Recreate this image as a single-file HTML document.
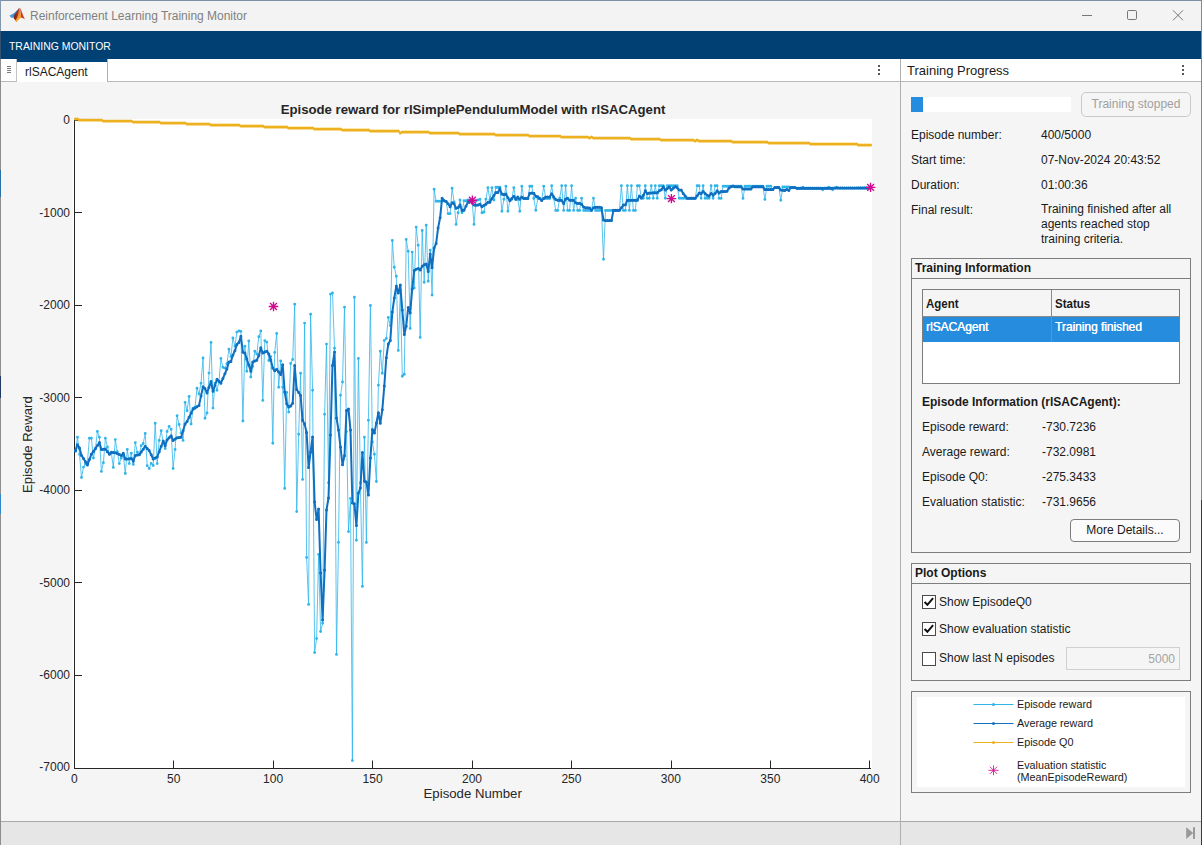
<!DOCTYPE html>
<html lang="en"><head><meta charset="utf-8"><title>Reinforcement Learning Training Monitor</title>
<style>
*{box-sizing:border-box;margin:0;padding:0}
html,body{width:1202px;height:845px;overflow:hidden;background:#f5f5f5}
body{font-family:"Liberation Sans",sans-serif;font-size:12px;color:#1a1a1a;position:relative}
.abs{position:absolute}
.t{position:absolute;white-space:nowrap;line-height:14px;height:14px}
#titlebar{left:0;top:0;width:1202px;height:31px;background:#f3f3f3}
#ribbon{left:1px;top:31px;width:1200px;height:28px;background:#004073}
#tabrow{left:1px;top:59px;width:1200px;height:23px;background:#fff;border-bottom:1px solid #b9b9b9}
#status{left:1px;top:821px;width:1200px;height:24px;background:#e6e6e6;border-top:1px solid #a9a9a9}
.panel{position:absolute;border:1px solid #7d7d7d;background:#f5f5f5}
.phead{position:absolute;left:0;top:0;right:0;height:20px;border-bottom:1px solid #7d7d7d}
.b{font-weight:bold}
</style></head>
<body>
<div id="titlebar" class="abs"></div>
<svg class="abs" style="left:8px;top:7px" width="18" height="16" viewBox="0 0 18 16">
<defs>
<linearGradient id="lgb" x1="0" y1="0" x2="1" y2="0"><stop offset="0" stop-color="#55a8e6"/><stop offset="0.6" stop-color="#2f86cf"/><stop offset="1" stop-color="#1c4f94"/></linearGradient>
<linearGradient id="lgo" x1="0" y1="0" x2="0" y2="1"><stop offset="0" stop-color="#e9862a"/><stop offset="0.6" stop-color="#f0952f"/><stop offset="1" stop-color="#f8b82e"/></linearGradient>
<linearGradient id="lgr" x1="0" y1="0" x2="1" y2="0"><stop offset="0" stop-color="#7d1a12"/><stop offset="1" stop-color="#c9401e"/></linearGradient>
</defs>
<path d="M1.2 8.7 L6.0 6.2 L10.0 2.6 L11.2 1.0 L10.4 4.4 L7.0 10.2 L3.8 11.1 Z" fill="url(#lgb)"/>
<path d="M11.3 0.8 C10.4 2.6 8.4 6.0 6.3 8.0 L5.8 11.5 C6.8 12.3 7.6 13.6 8.3 15 C9.6 13.6 11 11.4 12.2 10.2 C12 6.6 11.8 3 11.3 0.8 Z" fill="url(#lgr)"/>
<path d="M11.4 0.8 C11.0 3.4 10.6 7.2 9.2 10.4 C8.6 11.8 7.6 13 7.2 13.4 C7.6 13.9 8 14.4 8.3 15 C10 13.4 11.8 11.2 13 10.8 C12.9 7 12.4 2.6 11.4 0.8 Z" fill="url(#lgo)"/>
<path d="M11.6 0.8 C12.9 1.4 14.3 7 17 12.5 C15.3 11.4 14.2 10.5 13.1 10.8 C12.9 7 12.6 3 11.6 0.8 Z" fill="#cc3d1f"/>
</svg>
<div class="t " style="left:30px;top:9px;font-size:12.5px;color:#808080;transform:scaleX(0.958);transform-origin:0 50%">Reinforcement Learning Training Monitor</div>
<svg class="abs" style="left:1075px;top:5px" width="115" height="21" viewBox="0 0 115 21">
<path d="M7 10.5 H17" stroke="#777" stroke-width="1" fill="none"/>
<rect x="52.5" y="5.5" width="9" height="9" rx="1.2" stroke="#777" stroke-width="1" fill="none"/>
<path d="M98 5.3 L108 15.3 M108 5.3 L98 15.3" stroke="#777" stroke-width="1" fill="none"/>
</svg>
<div id="ribbon" class="abs"></div>
<div class="t " style="left:9px;top:39px;color:#fff;font-size:11.6px;transform:scaleX(0.90);transform-origin:0 50%">TRAINING MONITOR</div>
<div id="tabrow" class="abs"></div>
<div class="abs" style="left:17px;top:59px;width:91px;height:23px;background:#fff;border-right:1px solid #b0b0b0"></div>
<div class="abs" style="left:17px;top:59px;width:90px;height:3px;background:#00467d"></div>
<div class="abs" style="left:16px;top:59px;width:1px;height:22px;background:#c4c4c4"></div>
<div class="abs" style="left:7px;top:66px;width:4px;height:1px;background:#7a7a7a;box-shadow:0 2px 0 #7a7a7a,0 4px 0 #7a7a7a,0 6px 0 #7a7a7a"></div>
<div class="t " style="left:25px;top:65px;font-size:12px">rlSACAgent</div>
<div class="abs" style="left:878px;top:65px;width:2px;height:2px;background:#555;box-shadow:0 4px 0 #555,0 8px 0 #555"></div>
<div class="abs" style="left:1182px;top:65px;width:2px;height:2px;background:#555;box-shadow:0 4px 0 #555,0 8px 0 #555"></div>
<div class="abs" style="left:900px;top:59px;width:1px;height:786px;background:#b0b0b0;z-index:3"></div>
<div class="t " style="left:907px;top:64px;font-size:13px">Training Progress</div>
<div class="abs" style="left:0;top:0;width:1202px;height:1px;background:#7c8fa6"></div>
<div class="abs" style="left:0;top:0;width:1px;height:845px;background:#8e8e8e"></div>
<div class="abs" style="left:0;top:0;width:1px;height:31px;background:#8397ad"></div>
<div class="abs" style="left:1201px;top:0;width:1px;height:845px;background:#7f8a96"></div>
<div class="abs" style="left:1201px;top:500px;width:1px;height:345px;background:#2b3b69"></div>
<div class="abs" style="left:0;top:844px;width:1202px;height:1px;background:#8e8e8e"></div>
<div class="abs" style="left:1095px;top:844px;width:107px;height:1px;background:#1f2d5a"></div>
<div class="abs" style="left:0;top:31px;width:1px;height:28px;background:#34526f"></div>
<div class="abs" style="left:0;top:170px;width:1px;height:27px;background:#2a6fa8"></div>
<div class="abs" style="left:0;top:494px;width:1px;height:20px;background:#2e86c8"></div>
<div class="abs" style="left:0;top:376px;width:1px;height:22px;background:#1f3864"></div>
<div id="status" class="abs"></div>
<svg class="abs" style="left:1184px;top:826px" width="12" height="14" viewBox="0 0 12 14">
<path d="M2.2 1.2 L9.2 7 L2.2 12.9 Z" fill="#999"/><rect x="9" y="1.2" width="2" height="11.7" fill="#999"/></svg>
<div class="abs" style="left:911px;top:97px;width:160px;height:15px;background:#fff"></div>
<div class="abs" style="left:911px;top:97px;width:12px;height:15px;background:#268cdd"></div>
<div class="abs" style="left:1081px;top:92px;width:110px;height:25px;border:1px solid #c9c9c9;border-radius:5px;background:#f5f5f5"></div>
<div class="t " style="left:1081px;top:97px;width:110px;text-align:center;color:#a0a0a0">Training stopped</div>
<div class="t " style="left:911px;top:128px;">Episode number:</div>
<div class="t " style="left:1041px;top:128px;">400/5000</div>
<div class="t " style="left:911px;top:153px;">Start time:</div>
<div class="t " style="left:1041px;top:153px;">07-Nov-2024 20:43:52</div>
<div class="t " style="left:911px;top:178px;">Duration:</div>
<div class="t " style="left:1041px;top:178px;">01:00:36</div>
<div class="t " style="left:911px;top:203px;">Final result:</div>
<div class="t " style="left:1041px;top:202px;">Training finished after all</div>
<div class="t " style="left:1041px;top:217px;">agents reached stop</div>
<div class="t " style="left:1041px;top:232px;">training criteria.</div>
<div class="panel" style="left:911px;top:258px;width:280px;height:295px"><div class="phead"></div></div>
<div class="t b" style="left:915px;top:261px;">Training Information</div>
<div class="abs" style="left:922px;top:289px;width:258px;height:95px;background:#fff;border:1px solid #7d7d7d"></div>
<div class="abs" style="left:923px;top:290px;width:256px;height:27px;background:#f5f5f5;border-bottom:1px solid #8a8a8a"></div>
<div class="abs" style="left:923px;top:317px;width:256px;height:24.5px;background:#268cdd"></div>
<div class="abs" style="left:1051px;top:290px;width:1px;height:51.5px;background:#8a8a8a"></div>
<div class="t b" style="left:926px;top:297px;font-size:12.4px;transform:scaleX(0.93);transform-origin:0 50%">Agent</div>
<div class="t b" style="left:1055px;top:297px;font-size:12.4px;transform:scaleX(0.93);transform-origin:0 50%">Status</div>
<div class="t " style="left:926px;top:320px;color:#fff;text-shadow:0.35px 0 0 #fff;letter-spacing:-0.05px">rlSACAgent</div>
<div class="t " style="left:1055px;top:320px;color:#fff;text-shadow:0.35px 0 0 #fff;letter-spacing:-0.05px">Training finished</div>
<div class="t b" style="left:922px;top:395px;">Episode Information (rlSACAgent):</div>
<div class="t " style="left:922px;top:420px;">Episode reward:</div>
<div class="t " style="left:1042px;top:420px;">-730.7236</div>
<div class="t " style="left:922px;top:445px;">Average reward:</div>
<div class="t " style="left:1042px;top:445px;">-732.0981</div>
<div class="t " style="left:922px;top:470px;">Episode Q0:</div>
<div class="t " style="left:1042px;top:470px;">-275.3433</div>
<div class="t " style="left:922px;top:495px;">Evaluation statistic:</div>
<div class="t " style="left:1042px;top:495px;">-731.9656</div>
<div class="abs" style="left:1070px;top:519px;width:110px;height:23px;border:1px solid #7d7d7d;border-radius:4px;background:#fbfbfb"></div>
<div class="t " style="left:1070px;top:523px;width:110px;text-align:center">More Details...</div>
<div class="panel" style="left:911px;top:563px;width:280px;height:118px"><div class="phead"></div></div>
<div class="t b" style="left:915px;top:566px;">Plot Options</div>
<div class="abs" style="left:922px;top:595px;width:14px;height:14px;border:1px solid #4a4a4a;background:#fff"></div>
<svg class="abs" style="left:922px;top:595px" width="14" height="14" viewBox="0 0 14 14"><path d="M2.6 7 L5.4 9.8 L11.1 3.1" stroke="#111" stroke-width="2" fill="none"/></svg>
<div class="t " style="left:939px;top:595px;">Show EpisodeQ0</div>
<div class="abs" style="left:922px;top:622px;width:14px;height:14px;border:1px solid #4a4a4a;background:#fff"></div>
<svg class="abs" style="left:922px;top:622px" width="14" height="14" viewBox="0 0 14 14"><path d="M2.6 7 L5.4 9.8 L11.1 3.1" stroke="#111" stroke-width="2" fill="none"/></svg>
<div class="t " style="left:939px;top:622px;">Show evaluation statistic</div>
<div class="abs" style="left:922px;top:652px;width:14px;height:14px;border:1px solid #4a4a4a;background:#fff"></div>
<div class="t " style="left:939px;top:651px;">Show last N episodes</div>
<div class="abs" style="left:1066px;top:647px;width:114px;height:23px;border:1px solid #d0d0d0;background:#f5f5f5"></div>
<div class="t " style="left:1066px;top:652px;width:109px;text-align:right;color:#a3a3a3">5000</div>
<div class="panel" style="left:911px;top:691px;width:280px;height:102px"></div>
<div class="abs" style="left:917px;top:697px;width:268px;height:90px;background:#fff"></div>
<svg class="abs" style="left:917px;top:697px" width="268" height="90" viewBox="917 697 268 90"><path d="M973.5 704.5 H1013.5" stroke="#30b5eb" stroke-width="1"/><circle cx="993.5" cy="704.5" r="1.5" fill="#30b5eb"/><path d="M973.5 723.5 H1013.5" stroke="#1572c2" stroke-width="1"/><circle cx="993.5" cy="723.5" r="1.5" fill="#1572c2"/><path d="M973.5 742.5 H1013.5" stroke="#edb120" stroke-width="1"/><circle cx="993.5" cy="742.5" r="1.5" fill="#edb120"/><g stroke="#cf0a90" stroke-width="0.85"><path d="M993.5 765.4 V775.2 M988.4 770.3 H998.6 M989.9 766.7 L997.1 773.9 M997.1 766.7 L989.9 773.9"/></g></svg>
<div class="t " style="left:1017px;top:697px;font-size:10.8px">Episode reward</div>
<div class="t " style="left:1017px;top:716px;font-size:10.8px">Average reward</div>
<div class="t " style="left:1017px;top:735px;font-size:10.8px">Episode Q0</div>
<div class="t " style="left:1017px;top:758px;font-size:10.8px">Evaluation statistic</div>
<div class="t " style="left:1017px;top:770px;font-size:10.8px">(MeanEpisodeReward)</div>
<svg class="abs" style="left:0;top:82px" width="900" height="740" viewBox="0 82 900 740" font-family="Liberation Sans, sans-serif">
<rect x="72.8" y="119" width="799.2" height="650" fill="#fff"/>
<g stroke="#262626" stroke-width="1" fill="none">
<path d="M74.5 119.5V769M74 768.5H871"/>
<path d="M74.5 120.50H82"/>
<path d="M74.5 212.50H82"/>
<path d="M74.5 305.50H82"/>
<path d="M74.5 397.50H82"/>
<path d="M74.5 490.50H82"/>
<path d="M74.5 582.50H82"/>
<path d="M74.5 675.50H82"/>
<path d="M173.50 768.5V760.5"/>
<path d="M273.50 768.5V760.5"/>
<path d="M372.50 768.5V760.5"/>
<path d="M472.50 768.5V760.5"/>
<path d="M571.50 768.5V760.5"/>
<path d="M671.50 768.5V760.5"/>
<path d="M770.50 768.5V760.5"/>
<path d="M869.50 768.5V760.5"/>
</g>
<g fill="none" stroke-linejoin="round" stroke-linecap="round">
<polyline points="75.5,450.6 77.5,437.3 79.5,454.3 81.5,477.5 83.5,467.1 85.5,463.9 87.4,462.3 89.4,438.3 91.4,438.3 93.4,458.0 95.4,449.0 97.4,431.4 99.4,437.3 101.4,471.4 103.4,462.8 105.4,438.3 107.4,446.9 109.4,453.8 111.4,453.2 113.3,467.4 115.3,439.6 117.3,451.7 119.3,463.6 121.3,458.0 123.3,455.4 125.3,473.5 127.3,449.5 129.3,463.6 131.3,453.2 133.3,464.4 135.3,442.6 137.3,452.2 139.3,454.3 141.2,445.8 143.2,443.5 145.2,433.5 147.2,465.7 149.2,468.5 151.2,463.4 153.2,465.5 155.2,423.2 157.2,463.6 159.2,440.5 161.2,430.7 163.2,442.6 165.2,448.5 167.1,431.4 169.1,426.4 171.1,429.3 173.1,468.5 175.1,449.5 177.1,415.7 179.1,424.5 181.1,432.9 183.1,440.4 185.1,402.4 187.1,410.7 189.1,396.5 191.1,424.0 193.1,408.1 195.0,407.2 197.0,388.2 199.0,393.9 201.0,383.2 203.0,358.0 205.0,418.2 207.0,413.0 209.0,373.1 211.0,342.4 213.0,408.1 215.0,383.2 217.0,390.3 219.0,381.5 220.9,358.4 222.9,367.3 224.9,368.1 226.9,363.7 228.9,349.2 230.9,356.6 232.9,338.0 234.9,346.0 236.9,332.1 238.9,330.9 240.9,331.4 242.9,421.0 244.9,346.3 246.8,371.2 248.8,341.0 250.8,377.0 252.8,366.4 254.8,351.3 256.8,354.0 258.8,336.7 260.8,330.9 262.8,400.4 264.8,340.6 266.8,342.1 268.8,360.5 270.8,356.6 272.8,443.3 274.7,352.4 276.7,333.5 278.7,387.3 280.7,361.0 282.7,387.3 284.7,488.4 286.7,392.5 288.7,412.1 290.7,363.5 292.7,359.5 294.7,304.3 296.7,511.6 298.7,434.2 300.6,373.3 302.6,479.4 304.6,323.1 306.6,557.4 308.6,604.4 310.6,314.2 312.6,390.3 314.6,652.6 316.6,638.6 318.6,554.4 320.6,631.5 322.6,623.3 324.6,414.3 326.5,344.1 328.5,482.7 330.5,294.1 332.5,293.0 334.5,348.2 336.5,654.4 338.5,542.4 340.5,395.2 342.5,382.0 344.5,307.2 346.5,431.6 348.5,531.6 350.5,498.5 352.4,760.6 354.4,297.3 356.4,540.3 358.4,358.4 360.4,483.0 362.4,586.4 364.4,437.2 366.4,542.4 368.4,420.3 370.4,305.4 372.4,442.0 374.4,454.2 376.4,481.5 378.4,385.3 380.3,351.2 382.3,373.3 384.3,340.4 386.3,338.4 388.3,317.4 390.3,325.6 392.3,240.5 394.3,267.3 396.3,276.2 398.3,350.4 400.3,290.6 402.3,376.3 404.3,374.2 406.2,239.4 408.2,251.2 410.2,328.4 412.2,252.1 414.2,287.9 416.2,227.1 418.2,245.2 420.2,337.4 422.2,230.4 424.2,282.2 426.2,225.3 428.2,281.2 430.2,250.3 432.1,295.0 434.1,189.2 436.1,201.3 438.1,201.3 440.1,201.3 442.1,201.0 444.1,200.8 446.1,201.5 448.1,213.6 450.1,213.6 452.1,188.3 454.1,202.0 456.1,224.4 458.1,212.8 460.0,200.0 462.0,212.8 464.0,200.8 466.0,200.8 468.0,200.0 470.0,200.0 472.0,200.0 474.0,224.4 476.0,200.8 478.0,200.0 480.0,199.3 482.0,212.8 484.0,212.0 485.9,199.3 487.9,187.7 489.9,200.0 491.9,187.7 493.9,200.0 495.9,187.3 497.9,187.3 499.9,187.3 501.9,211.3 503.9,199.3 505.9,186.2 507.9,211.3 509.9,200.0 511.8,199.3 513.8,187.7 515.8,199.3 517.8,199.3 519.8,211.3 521.8,186.2 523.8,198.5 525.8,198.5 527.8,198.5 529.8,186.2 531.8,186.2 533.8,198.5 535.8,210.3 537.8,198.5 539.7,198.5 541.7,200.0 543.7,186.2 545.7,198.5 547.7,198.5 549.7,198.5 551.7,185.8 553.7,198.3 555.7,210.4 557.7,210.4 559.7,198.3 561.7,185.8 563.7,210.4 565.6,185.8 567.6,210.4 569.6,210.4 571.6,185.8 573.6,210.4 575.6,198.3 577.6,210.4 579.6,210.4 581.6,198.3 583.6,210.4 585.6,210.4 587.6,210.4 589.6,210.4 591.5,210.4 593.5,198.3 595.5,210.4 597.5,210.4 599.5,210.4 601.5,210.4 603.5,259.2 605.5,210.4 607.5,210.4 609.5,210.4 611.5,210.4 613.5,210.4 615.5,210.4 617.5,210.4 619.4,210.4 621.4,185.8 623.4,210.4 625.4,210.4 627.4,185.8 629.4,210.4 631.4,185.8 633.4,210.4 635.4,210.4 637.4,185.8 639.4,185.8 641.4,198.3 643.4,198.3 645.3,185.8 647.3,198.3 649.3,198.3 651.3,185.8 653.3,198.3 655.3,185.8 657.3,198.3 659.3,185.8 661.3,185.8 663.3,185.8 665.3,198.3 667.3,185.8 669.3,185.8 671.2,185.8 673.2,185.8 675.2,185.8 677.2,185.8 679.2,198.3 681.2,198.3 683.2,198.3 685.2,198.3 687.2,198.3 689.2,198.3 691.2,198.3 693.2,198.3 695.2,198.3 697.2,185.8 699.1,185.8 701.1,198.3 703.1,185.8 705.1,198.3 707.1,198.3 709.1,198.3 711.1,185.8 713.1,198.3 715.1,185.8 717.1,185.8 719.1,198.3 721.1,198.4 723.1,186.3 725.0,186.3 727.0,186.3 729.0,186.3 731.0,186.3 733.0,186.3 735.0,186.3 737.0,186.3 739.0,186.3 741.0,186.3 743.0,198.4 745.0,186.3 747.0,186.3 749.0,186.3 750.9,186.3 752.9,186.3 754.9,186.3 756.9,186.3 758.9,186.3 760.9,186.3 762.9,186.3 764.9,199.4 766.9,186.3 768.9,186.3 770.9,186.3 772.9,189.4 774.9,187.4 776.9,187.4 778.8,187.4 780.8,200.3 782.8,187.0 784.8,187.0 786.8,187.0 788.8,187.0 790.8,187.6 792.8,187.6 794.8,187.6 796.8,188.3 798.8,188.3 800.8,188.3 802.8,187.2 804.7,188.3 806.7,188.3 808.7,188.3 810.7,188.2 812.7,188.2 814.7,188.2 816.7,188.2 818.7,188.2 820.7,188.2 822.7,189.8 824.7,188.2 826.7,188.2 828.7,187.2 830.6,188.2 832.6,189.8 834.6,188.1 836.6,187.2 838.6,188.1 840.6,188.1 842.6,188.1 844.6,188.1 846.6,188.1 848.6,188.1 850.6,188.1 852.6,188.1 854.6,188.1 856.6,188.1 858.5,188.0 860.5,188.0 862.5,188.0 864.5,188.0 866.5,188.0 868.5,188.0 870.5,187.7" stroke="#30b5eb" stroke-width="0.8"/>
<path d="M75.5 450.6h0M77.5 437.3h0M79.5 454.3h0M81.5 477.5h0M83.5 467.1h0M85.5 463.9h0M87.4 462.3h0M89.4 438.3h0M91.4 438.3h0M93.4 458.0h0M95.4 449.0h0M97.4 431.4h0M99.4 437.3h0M101.4 471.4h0M103.4 462.8h0M105.4 438.3h0M107.4 446.9h0M109.4 453.8h0M111.4 453.2h0M113.3 467.4h0M115.3 439.6h0M117.3 451.7h0M119.3 463.6h0M121.3 458.0h0M123.3 455.4h0M125.3 473.5h0M127.3 449.5h0M129.3 463.6h0M131.3 453.2h0M133.3 464.4h0M135.3 442.6h0M137.3 452.2h0M139.3 454.3h0M141.2 445.8h0M143.2 443.5h0M145.2 433.5h0M147.2 465.7h0M149.2 468.5h0M151.2 463.4h0M153.2 465.5h0M155.2 423.2h0M157.2 463.6h0M159.2 440.5h0M161.2 430.7h0M163.2 442.6h0M165.2 448.5h0M167.1 431.4h0M169.1 426.4h0M171.1 429.3h0M173.1 468.5h0M175.1 449.5h0M177.1 415.7h0M179.1 424.5h0M181.1 432.9h0M183.1 440.4h0M185.1 402.4h0M187.1 410.7h0M189.1 396.5h0M191.1 424.0h0M193.1 408.1h0M195.0 407.2h0M197.0 388.2h0M199.0 393.9h0M201.0 383.2h0M203.0 358.0h0M205.0 418.2h0M207.0 413.0h0M209.0 373.1h0M211.0 342.4h0M213.0 408.1h0M215.0 383.2h0M217.0 390.3h0M219.0 381.5h0M220.9 358.4h0M222.9 367.3h0M224.9 368.1h0M226.9 363.7h0M228.9 349.2h0M230.9 356.6h0M232.9 338.0h0M234.9 346.0h0M236.9 332.1h0M238.9 330.9h0M240.9 331.4h0M242.9 421.0h0M244.9 346.3h0M246.8 371.2h0M248.8 341.0h0M250.8 377.0h0M252.8 366.4h0M254.8 351.3h0M256.8 354.0h0M258.8 336.7h0M260.8 330.9h0M262.8 400.4h0M264.8 340.6h0M266.8 342.1h0M268.8 360.5h0M270.8 356.6h0M272.8 443.3h0M274.7 352.4h0M276.7 333.5h0M278.7 387.3h0M280.7 361.0h0M282.7 387.3h0M284.7 488.4h0M286.7 392.5h0M288.7 412.1h0M290.7 363.5h0M292.7 359.5h0M294.7 304.3h0M296.7 511.6h0M298.7 434.2h0M300.6 373.3h0M302.6 479.4h0M304.6 323.1h0M306.6 557.4h0M308.6 604.4h0M310.6 314.2h0M312.6 390.3h0M314.6 652.6h0M316.6 638.6h0M318.6 554.4h0M320.6 631.5h0M322.6 623.3h0M324.6 414.3h0M326.5 344.1h0M328.5 482.7h0M330.5 294.1h0M332.5 293.0h0M334.5 348.2h0M336.5 654.4h0M338.5 542.4h0M340.5 395.2h0M342.5 382.0h0M344.5 307.2h0M346.5 431.6h0M348.5 531.6h0M350.5 498.5h0M352.4 760.6h0M354.4 297.3h0M356.4 540.3h0M358.4 358.4h0M360.4 483.0h0M362.4 586.4h0M364.4 437.2h0M366.4 542.4h0M368.4 420.3h0M370.4 305.4h0M372.4 442.0h0M374.4 454.2h0M376.4 481.5h0M378.4 385.3h0M380.3 351.2h0M382.3 373.3h0M384.3 340.4h0M386.3 338.4h0M388.3 317.4h0M390.3 325.6h0M392.3 240.5h0M394.3 267.3h0M396.3 276.2h0M398.3 350.4h0M400.3 290.6h0M402.3 376.3h0M404.3 374.2h0M406.2 239.4h0M408.2 251.2h0M410.2 328.4h0M412.2 252.1h0M414.2 287.9h0M416.2 227.1h0M418.2 245.2h0M420.2 337.4h0M422.2 230.4h0M424.2 282.2h0M426.2 225.3h0M428.2 281.2h0M430.2 250.3h0M432.1 295.0h0M434.1 189.2h0M436.1 201.3h0M438.1 201.3h0M440.1 201.3h0M442.1 201.0h0M444.1 200.8h0M446.1 201.5h0M448.1 213.6h0M450.1 213.6h0M452.1 188.3h0M454.1 202.0h0M456.1 224.4h0M458.1 212.8h0M460.0 200.0h0M462.0 212.8h0M464.0 200.8h0M466.0 200.8h0M468.0 200.0h0M470.0 200.0h0M472.0 200.0h0M474.0 224.4h0M476.0 200.8h0M478.0 200.0h0M480.0 199.3h0M482.0 212.8h0M484.0 212.0h0M485.9 199.3h0M487.9 187.7h0M489.9 200.0h0M491.9 187.7h0M493.9 200.0h0M495.9 187.3h0M497.9 187.3h0M499.9 187.3h0M501.9 211.3h0M503.9 199.3h0M505.9 186.2h0M507.9 211.3h0M509.9 200.0h0M511.8 199.3h0M513.8 187.7h0M515.8 199.3h0M517.8 199.3h0M519.8 211.3h0M521.8 186.2h0M523.8 198.5h0M525.8 198.5h0M527.8 198.5h0M529.8 186.2h0M531.8 186.2h0M533.8 198.5h0M535.8 210.3h0M537.8 198.5h0M539.7 198.5h0M541.7 200.0h0M543.7 186.2h0M545.7 198.5h0M547.7 198.5h0M549.7 198.5h0M551.7 185.8h0M553.7 198.3h0M555.7 210.4h0M557.7 210.4h0M559.7 198.3h0M561.7 185.8h0M563.7 210.4h0M565.6 185.8h0M567.6 210.4h0M569.6 210.4h0M571.6 185.8h0M573.6 210.4h0M575.6 198.3h0M577.6 210.4h0M579.6 210.4h0M581.6 198.3h0M583.6 210.4h0M585.6 210.4h0M587.6 210.4h0M589.6 210.4h0M591.5 210.4h0M593.5 198.3h0M595.5 210.4h0M597.5 210.4h0M599.5 210.4h0M601.5 210.4h0M603.5 259.2h0M605.5 210.4h0M607.5 210.4h0M609.5 210.4h0M611.5 210.4h0M613.5 210.4h0M615.5 210.4h0M617.5 210.4h0M619.4 210.4h0M621.4 185.8h0M623.4 210.4h0M625.4 210.4h0M627.4 185.8h0M629.4 210.4h0M631.4 185.8h0M633.4 210.4h0M635.4 210.4h0M637.4 185.8h0M639.4 185.8h0M641.4 198.3h0M643.4 198.3h0M645.3 185.8h0M647.3 198.3h0M649.3 198.3h0M651.3 185.8h0M653.3 198.3h0M655.3 185.8h0M657.3 198.3h0M659.3 185.8h0M661.3 185.8h0M663.3 185.8h0M665.3 198.3h0M667.3 185.8h0M669.3 185.8h0M671.2 185.8h0M673.2 185.8h0M675.2 185.8h0M677.2 185.8h0M679.2 198.3h0M681.2 198.3h0M683.2 198.3h0M685.2 198.3h0M687.2 198.3h0M689.2 198.3h0M691.2 198.3h0M693.2 198.3h0M695.2 198.3h0M697.2 185.8h0M699.1 185.8h0M701.1 198.3h0M703.1 185.8h0M705.1 198.3h0M707.1 198.3h0M709.1 198.3h0M711.1 185.8h0M713.1 198.3h0M715.1 185.8h0M717.1 185.8h0M719.1 198.3h0M721.1 198.4h0M723.1 186.3h0M725.0 186.3h0M727.0 186.3h0M729.0 186.3h0M731.0 186.3h0M733.0 186.3h0M735.0 186.3h0M737.0 186.3h0M739.0 186.3h0M741.0 186.3h0M743.0 198.4h0M745.0 186.3h0M747.0 186.3h0M749.0 186.3h0M750.9 186.3h0M752.9 186.3h0M754.9 186.3h0M756.9 186.3h0M758.9 186.3h0M760.9 186.3h0M762.9 186.3h0M764.9 199.4h0M766.9 186.3h0M768.9 186.3h0M770.9 186.3h0M772.9 189.4h0M774.9 187.4h0M776.9 187.4h0M778.8 187.4h0M780.8 200.3h0M782.8 187.0h0M784.8 187.0h0M786.8 187.0h0M788.8 187.0h0M790.8 187.6h0M792.8 187.6h0M794.8 187.6h0M796.8 188.3h0M798.8 188.3h0M800.8 188.3h0M802.8 187.2h0M804.7 188.3h0M806.7 188.3h0M808.7 188.3h0M810.7 188.2h0M812.7 188.2h0M814.7 188.2h0M816.7 188.2h0M818.7 188.2h0M820.7 188.2h0M822.7 189.8h0M824.7 188.2h0M826.7 188.2h0M828.7 187.2h0M830.6 188.2h0M832.6 189.8h0M834.6 188.1h0M836.6 187.2h0M838.6 188.1h0M840.6 188.1h0M842.6 188.1h0M844.6 188.1h0M846.6 188.1h0M848.6 188.1h0M850.6 188.1h0M852.6 188.1h0M854.6 188.1h0M856.6 188.1h0M858.5 188.0h0M860.5 188.0h0M862.5 188.0h0M864.5 188.0h0M866.5 188.0h0M868.5 188.0h0M870.5 187.7h0" stroke="#30b5eb" stroke-width="2.9"/>
<polyline points="75.5,450.9 77.5,444.7 79.5,447.9 81.5,455.4 83.5,458.6 85.5,461.8 87.4,465.0 89.4,459.6 91.4,454.3 93.4,451.4 95.4,448.5 97.4,445.5 99.4,442.6 101.4,449.5 103.4,449.3 105.4,449.0 107.4,451.7 109.4,454.3 111.4,452.2 113.3,452.4 115.3,452.7 117.3,453.6 119.3,454.5 121.3,455.4 123.3,453.2 125.3,459.1 127.3,458.9 129.3,458.8 131.3,458.6 133.3,461.2 135.3,455.4 137.3,455.1 139.3,454.8 141.2,452.0 143.2,449.2 145.2,446.3 147.2,448.5 149.2,450.6 151.2,454.8 153.2,459.1 155.2,458.0 157.2,457.0 159.2,451.7 161.2,446.3 163.2,441.0 165.2,445.8 167.1,439.9 169.1,437.8 171.1,435.7 173.1,440.5 175.1,439.1 177.1,437.8 179.1,437.6 181.1,437.3 183.1,430.7 185.1,424.0 187.1,421.4 189.1,417.2 191.1,413.1 193.1,409.0 195.0,408.1 197.0,406.7 199.0,405.4 201.0,396.1 203.0,386.8 205.0,388.6 207.0,393.0 209.0,387.2 211.0,381.5 213.0,391.2 215.0,385.3 217.0,379.3 219.0,381.3 220.9,383.2 222.9,378.5 224.9,373.8 226.9,369.0 228.9,361.9 230.9,361.5 232.9,355.1 234.9,350.7 236.9,344.4 238.9,342.4 240.9,336.2 242.9,352.2 244.9,353.1 246.8,359.1 248.8,365.1 250.8,371.2 252.8,361.9 254.8,361.1 256.8,360.2 258.8,355.7 260.8,347.7 262.8,353.1 264.8,352.0 266.8,351.2 268.8,354.0 270.8,360.0 272.8,368.0 274.7,370.8 276.7,369.3 278.7,372.0 280.7,374.5 282.7,364.7 284.7,392.0 286.7,403.8 288.7,407.0 290.7,406.0 292.7,403.2 294.7,365.5 296.7,389.5 298.7,392.5 300.6,395.5 302.6,420.3 304.6,424.1 306.6,432.4 308.6,467.4 310.6,452.0 312.6,436.9 314.6,502.0 316.6,519.5 318.6,509.0 320.6,572.9 322.6,620.0 324.6,570.0 326.5,510.0 328.5,498.0 330.5,435.0 332.5,365.6 334.5,352.0 336.5,418.0 338.5,430.0 340.5,447.0 342.5,464.7 344.5,455.7 346.5,410.6 348.5,409.1 350.5,430.1 352.4,503.0 354.4,503.8 356.4,525.6 358.4,493.0 360.4,488.0 362.4,452.6 364.4,481.2 366.4,482.0 368.4,495.0 370.4,457.9 372.4,429.4 374.4,433.1 376.4,423.0 378.4,412.8 380.3,423.3 382.3,409.8 384.3,386.0 386.3,357.7 388.3,344.0 390.3,340.4 392.3,312.1 394.3,298.0 396.3,286.0 398.3,293.0 400.3,285.0 402.3,310.0 404.3,334.4 406.2,326.2 408.2,307.6 410.2,312.9 412.2,289.1 414.2,270.4 416.2,269.2 418.2,268.4 420.2,269.9 422.2,266.2 424.2,264.7 426.2,263.9 428.2,271.4 430.2,254.1 432.1,267.7 434.1,248.1 436.1,243.6 438.1,227.9 440.1,217.8 442.1,198.2 444.1,200.8 446.1,201.6 448.1,203.8 450.1,206.8 452.1,202.8 454.1,203.8 456.1,208.3 458.1,207.6 460.0,204.9 462.0,210.6 464.0,210.3 466.0,206.1 468.0,202.3 470.0,200.8 472.0,202.8 474.0,204.9 476.0,205.3 478.0,204.9 480.0,204.3 482.0,206.8 484.0,205.3 485.9,204.3 487.9,202.3 489.9,202.3 491.9,198.5 493.9,195.5 495.9,192.5 497.9,192.5 499.9,188.8 501.9,194.0 503.9,194.8 505.9,194.0 507.9,197.8 509.9,200.8 511.8,198.5 513.8,196.3 515.8,199.3 517.8,197.0 519.8,199.3 521.8,197.0 523.8,198.5 525.8,198.2 527.8,198.5 529.8,193.3 531.8,193.0 533.8,193.3 535.8,196.3 537.8,196.7 539.7,198.5 541.7,200.5 543.7,198.5 545.7,197.0 547.7,197.0 549.7,197.0 551.7,193.8 553.7,196.8 555.7,199.4 557.7,200.3 559.7,200.3 561.7,200.6 563.7,203.6 565.6,199.1 567.6,198.3 569.6,200.3 571.6,200.3 573.6,200.3 575.6,202.8 577.6,203.6 579.6,203.3 581.6,204.3 583.6,206.9 585.6,207.8 587.6,207.8 589.6,208.1 591.5,210.3 593.5,207.8 595.5,207.3 597.5,207.3 599.5,207.3 601.5,207.8 603.5,220.1 605.5,220.4 607.5,220.4 609.5,220.4 611.5,220.4 613.5,210.3 615.5,210.3 617.5,210.3 619.4,210.3 621.4,207.8 623.4,205.1 625.4,204.8 627.4,200.3 629.4,200.3 631.4,200.3 633.4,200.3 635.4,200.3 637.4,200.3 639.4,196.1 641.4,197.9 643.4,195.3 645.3,190.8 647.3,193.8 649.3,193.1 651.3,193.1 653.3,192.8 655.3,192.8 657.3,192.8 659.3,190.8 661.3,189.8 663.3,186.7 665.3,190.1 667.3,188.5 669.3,187.0 671.2,190.1 673.2,188.2 675.2,186.7 677.2,187.8 679.2,190.1 681.2,190.1 683.2,193.4 685.2,196.1 687.2,198.3 689.2,198.3 691.2,198.3 693.2,198.3 695.2,198.3 697.2,195.8 699.1,193.1 701.1,193.4 703.1,191.6 705.1,193.4 707.1,195.3 709.1,196.1 711.1,193.4 713.1,195.3 715.1,193.4 717.1,190.8 719.1,193.1 721.1,191.6 723.1,191.5 725.0,191.4 727.0,191.3 729.0,187.9 731.0,186.8 733.0,185.9 735.0,186.8 737.0,186.8 739.0,186.8 741.0,186.8 743.0,188.9 745.0,188.9 747.0,188.9 749.0,188.9 750.9,188.9 752.9,186.8 754.9,186.8 756.9,186.8 758.9,186.8 760.9,186.8 762.9,186.8 764.9,189.4 766.9,189.4 768.9,189.4 770.9,189.4 772.9,189.4 774.9,187.4 776.9,187.4 778.8,187.4 780.8,190.1 782.8,190.3 784.8,190.4 786.8,189.4 788.8,190.4 790.8,187.6 792.8,187.6 794.8,187.6 796.8,188.3 798.8,188.3 800.8,188.3 802.8,188.3 804.7,188.3 806.7,188.3 808.7,188.3 810.7,188.2 812.7,188.2 814.7,188.2 816.7,188.2 818.7,188.2 820.7,188.2 822.7,188.2 824.7,188.2 826.7,188.2 828.7,188.2 830.6,188.2 832.6,188.2 834.6,188.1 836.6,188.1 838.6,188.1 840.6,188.1 842.6,188.1 844.6,188.1 846.6,188.1 848.6,188.1 850.6,188.1 852.6,188.1 854.6,188.1 856.6,188.1 858.5,188.0 860.5,188.0 862.5,188.0 864.5,188.0 866.5,188.0 868.5,188.0 870.5,187.7" stroke="#0f6fc0" stroke-width="2"/>
<path d="M75.5 450.9h0M77.5 444.7h0M79.5 447.9h0M81.5 455.4h0M83.5 458.6h0M85.5 461.8h0M87.4 465.0h0M89.4 459.6h0M91.4 454.3h0M93.4 451.4h0M95.4 448.5h0M97.4 445.5h0M99.4 442.6h0M101.4 449.5h0M103.4 449.3h0M105.4 449.0h0M107.4 451.7h0M109.4 454.3h0M111.4 452.2h0M113.3 452.4h0M115.3 452.7h0M117.3 453.6h0M119.3 454.5h0M121.3 455.4h0M123.3 453.2h0M125.3 459.1h0M127.3 458.9h0M129.3 458.8h0M131.3 458.6h0M133.3 461.2h0M135.3 455.4h0M137.3 455.1h0M139.3 454.8h0M141.2 452.0h0M143.2 449.2h0M145.2 446.3h0M147.2 448.5h0M149.2 450.6h0M151.2 454.8h0M153.2 459.1h0M155.2 458.0h0M157.2 457.0h0M159.2 451.7h0M161.2 446.3h0M163.2 441.0h0M165.2 445.8h0M167.1 439.9h0M169.1 437.8h0M171.1 435.7h0M173.1 440.5h0M175.1 439.1h0M177.1 437.8h0M179.1 437.6h0M181.1 437.3h0M183.1 430.7h0M185.1 424.0h0M187.1 421.4h0M189.1 417.2h0M191.1 413.1h0M193.1 409.0h0M195.0 408.1h0M197.0 406.7h0M199.0 405.4h0M201.0 396.1h0M203.0 386.8h0M205.0 388.6h0M207.0 393.0h0M209.0 387.2h0M211.0 381.5h0M213.0 391.2h0M215.0 385.3h0M217.0 379.3h0M219.0 381.3h0M220.9 383.2h0M222.9 378.5h0M224.9 373.8h0M226.9 369.0h0M228.9 361.9h0M230.9 361.5h0M232.9 355.1h0M234.9 350.7h0M236.9 344.4h0M238.9 342.4h0M240.9 336.2h0M242.9 352.2h0M244.9 353.1h0M246.8 359.1h0M248.8 365.1h0M250.8 371.2h0M252.8 361.9h0M254.8 361.1h0M256.8 360.2h0M258.8 355.7h0M260.8 347.7h0M262.8 353.1h0M264.8 352.0h0M266.8 351.2h0M268.8 354.0h0M270.8 360.0h0M272.8 368.0h0M274.7 370.8h0M276.7 369.3h0M278.7 372.0h0M280.7 374.5h0M282.7 364.7h0M284.7 392.0h0M286.7 403.8h0M288.7 407.0h0M290.7 406.0h0M292.7 403.2h0M294.7 365.5h0M296.7 389.5h0M298.7 392.5h0M300.6 395.5h0M302.6 420.3h0M304.6 424.1h0M306.6 432.4h0M308.6 467.4h0M310.6 452.0h0M312.6 436.9h0M314.6 502.0h0M316.6 519.5h0M318.6 509.0h0M320.6 572.9h0M322.6 620.0h0M324.6 570.0h0M326.5 510.0h0M328.5 498.0h0M330.5 435.0h0M332.5 365.6h0M334.5 352.0h0M336.5 418.0h0M338.5 430.0h0M340.5 447.0h0M342.5 464.7h0M344.5 455.7h0M346.5 410.6h0M348.5 409.1h0M350.5 430.1h0M352.4 503.0h0M354.4 503.8h0M356.4 525.6h0M358.4 493.0h0M360.4 488.0h0M362.4 452.6h0M364.4 481.2h0M366.4 482.0h0M368.4 495.0h0M370.4 457.9h0M372.4 429.4h0M374.4 433.1h0M376.4 423.0h0M378.4 412.8h0M380.3 423.3h0M382.3 409.8h0M384.3 386.0h0M386.3 357.7h0M388.3 344.0h0M390.3 340.4h0M392.3 312.1h0M394.3 298.0h0M396.3 286.0h0M398.3 293.0h0M400.3 285.0h0M402.3 310.0h0M404.3 334.4h0M406.2 326.2h0M408.2 307.6h0M410.2 312.9h0M412.2 289.1h0M414.2 270.4h0M416.2 269.2h0M418.2 268.4h0M420.2 269.9h0M422.2 266.2h0M424.2 264.7h0M426.2 263.9h0M428.2 271.4h0M430.2 254.1h0M432.1 267.7h0M434.1 248.1h0M436.1 243.6h0M438.1 227.9h0M440.1 217.8h0M442.1 198.2h0M444.1 200.8h0M446.1 201.6h0M448.1 203.8h0M450.1 206.8h0M452.1 202.8h0M454.1 203.8h0M456.1 208.3h0M458.1 207.6h0M460.0 204.9h0M462.0 210.6h0M464.0 210.3h0M466.0 206.1h0M468.0 202.3h0M470.0 200.8h0M472.0 202.8h0M474.0 204.9h0M476.0 205.3h0M478.0 204.9h0M480.0 204.3h0M482.0 206.8h0M484.0 205.3h0M485.9 204.3h0M487.9 202.3h0M489.9 202.3h0M491.9 198.5h0M493.9 195.5h0M495.9 192.5h0M497.9 192.5h0M499.9 188.8h0M501.9 194.0h0M503.9 194.8h0M505.9 194.0h0M507.9 197.8h0M509.9 200.8h0M511.8 198.5h0M513.8 196.3h0M515.8 199.3h0M517.8 197.0h0M519.8 199.3h0M521.8 197.0h0M523.8 198.5h0M525.8 198.2h0M527.8 198.5h0M529.8 193.3h0M531.8 193.0h0M533.8 193.3h0M535.8 196.3h0M537.8 196.7h0M539.7 198.5h0M541.7 200.5h0M543.7 198.5h0M545.7 197.0h0M547.7 197.0h0M549.7 197.0h0M551.7 193.8h0M553.7 196.8h0M555.7 199.4h0M557.7 200.3h0M559.7 200.3h0M561.7 200.6h0M563.7 203.6h0M565.6 199.1h0M567.6 198.3h0M569.6 200.3h0M571.6 200.3h0M573.6 200.3h0M575.6 202.8h0M577.6 203.6h0M579.6 203.3h0M581.6 204.3h0M583.6 206.9h0M585.6 207.8h0M587.6 207.8h0M589.6 208.1h0M591.5 210.3h0M593.5 207.8h0M595.5 207.3h0M597.5 207.3h0M599.5 207.3h0M601.5 207.8h0M603.5 220.1h0M605.5 220.4h0M607.5 220.4h0M609.5 220.4h0M611.5 220.4h0M613.5 210.3h0M615.5 210.3h0M617.5 210.3h0M619.4 210.3h0M621.4 207.8h0M623.4 205.1h0M625.4 204.8h0M627.4 200.3h0M629.4 200.3h0M631.4 200.3h0M633.4 200.3h0M635.4 200.3h0M637.4 200.3h0M639.4 196.1h0M641.4 197.9h0M643.4 195.3h0M645.3 190.8h0M647.3 193.8h0M649.3 193.1h0M651.3 193.1h0M653.3 192.8h0M655.3 192.8h0M657.3 192.8h0M659.3 190.8h0M661.3 189.8h0M663.3 186.7h0M665.3 190.1h0M667.3 188.5h0M669.3 187.0h0M671.2 190.1h0M673.2 188.2h0M675.2 186.7h0M677.2 187.8h0M679.2 190.1h0M681.2 190.1h0M683.2 193.4h0M685.2 196.1h0M687.2 198.3h0M689.2 198.3h0M691.2 198.3h0M693.2 198.3h0M695.2 198.3h0M697.2 195.8h0M699.1 193.1h0M701.1 193.4h0M703.1 191.6h0M705.1 193.4h0M707.1 195.3h0M709.1 196.1h0M711.1 193.4h0M713.1 195.3h0M715.1 193.4h0M717.1 190.8h0M719.1 193.1h0M721.1 191.6h0M723.1 191.5h0M725.0 191.4h0M727.0 191.3h0M729.0 187.9h0M731.0 186.8h0M733.0 185.9h0M735.0 186.8h0M737.0 186.8h0M739.0 186.8h0M741.0 186.8h0M743.0 188.9h0M745.0 188.9h0M747.0 188.9h0M749.0 188.9h0M750.9 188.9h0M752.9 186.8h0M754.9 186.8h0M756.9 186.8h0M758.9 186.8h0M760.9 186.8h0M762.9 186.8h0M764.9 189.4h0M766.9 189.4h0M768.9 189.4h0M770.9 189.4h0M772.9 189.4h0M774.9 187.4h0M776.9 187.4h0M778.8 187.4h0M780.8 190.1h0M782.8 190.3h0M784.8 190.4h0M786.8 189.4h0M788.8 190.4h0M790.8 187.6h0M792.8 187.6h0M794.8 187.6h0M796.8 188.3h0M798.8 188.3h0M800.8 188.3h0M802.8 188.3h0M804.7 188.3h0M806.7 188.3h0M808.7 188.3h0M810.7 188.2h0M812.7 188.2h0M814.7 188.2h0M816.7 188.2h0M818.7 188.2h0M820.7 188.2h0M822.7 188.2h0M824.7 188.2h0M826.7 188.2h0M828.7 188.2h0M830.6 188.2h0M832.6 188.2h0M834.6 188.1h0M836.6 188.1h0M838.6 188.1h0M840.6 188.1h0M842.6 188.1h0M844.6 188.1h0M846.6 188.1h0M848.6 188.1h0M850.6 188.1h0M852.6 188.1h0M854.6 188.1h0M856.6 188.1h0M858.5 188.0h0M860.5 188.0h0M862.5 188.0h0M864.5 188.0h0M866.5 188.0h0M868.5 188.0h0M870.5 187.7h0" stroke="#0f6fc0" stroke-width="3.0"/>
<path d="M75.5 119.0h0M77.5 119.0h0M79.5 120.0h0M81.5 120.0h0M83.5 120.0h0M85.5 120.0h0M87.4 120.0h0M89.4 120.0h0M91.4 120.0h0M93.4 120.0h0M95.4 120.0h0M97.4 120.0h0M99.4 120.0h0M101.4 120.0h0M103.4 121.0h0M105.4 121.0h0M107.4 121.0h0M109.4 121.0h0M111.4 121.0h0M113.3 121.0h0M115.3 121.0h0M117.3 121.0h0M119.3 121.0h0M121.3 121.0h0M123.3 121.0h0M125.3 121.0h0M127.3 121.0h0M129.3 121.0h0M131.3 121.0h0M133.3 122.0h0M135.3 122.0h0M137.3 122.0h0M139.3 122.0h0M141.2 122.0h0M143.2 122.0h0M145.2 122.0h0M147.2 122.0h0M149.2 122.0h0M151.2 122.0h0M153.2 122.0h0M155.2 122.0h0M157.2 122.0h0M159.2 122.0h0M161.2 123.0h0M163.2 123.0h0M165.2 123.0h0M167.1 123.0h0M169.1 123.0h0M171.1 123.0h0M173.1 123.0h0M175.1 123.0h0M177.1 123.0h0M179.1 123.0h0M181.1 123.0h0M183.1 123.0h0M185.1 123.0h0M187.1 124.0h0M189.1 124.0h0M191.1 124.0h0M193.1 124.0h0M195.0 124.0h0M197.0 124.0h0M199.0 124.0h0M201.0 124.0h0M203.0 124.0h0M205.0 124.0h0M207.0 124.0h0M209.0 124.0h0M211.0 125.0h0M213.0 125.0h0M215.0 125.0h0M217.0 125.0h0M219.0 125.0h0M220.9 125.0h0M222.9 125.0h0M224.9 125.0h0M226.9 125.0h0M228.9 125.0h0M230.9 125.0h0M232.9 125.0h0M234.9 125.0h0M236.9 125.0h0M238.9 125.0h0M240.9 126.0h0M242.9 126.0h0M244.9 126.0h0M246.8 126.0h0M248.8 126.0h0M250.8 126.0h0M252.8 126.0h0M254.8 126.0h0M256.8 126.0h0M258.8 126.0h0M260.8 126.0h0M262.8 126.0h0M264.8 127.0h0M266.8 127.0h0M268.8 127.0h0M270.8 127.0h0M272.8 127.0h0M274.7 127.0h0M276.7 127.0h0M278.7 127.0h0M280.7 127.0h0M282.7 127.0h0M284.7 127.0h0M286.7 127.0h0M288.7 128.0h0M290.7 128.0h0M292.7 128.0h0M294.7 128.0h0M296.7 128.0h0M298.7 128.0h0M300.6 128.0h0M302.6 128.0h0M304.6 128.0h0M306.6 128.0h0M308.6 128.0h0M310.6 128.0h0M312.6 128.0h0M314.6 129.0h0M316.6 129.0h0M318.6 129.0h0M320.6 129.0h0M322.6 129.0h0M324.6 129.0h0M326.5 129.0h0M328.5 129.0h0M330.5 129.0h0M332.5 129.0h0M334.5 129.0h0M336.5 129.0h0M338.5 129.0h0M340.5 129.0h0M342.5 130.0h0M344.5 130.0h0M346.5 130.0h0M348.5 130.0h0M350.5 130.0h0M352.4 130.0h0M354.4 130.0h0M356.4 130.0h0M358.4 130.0h0M360.4 130.0h0M362.4 130.0h0M364.4 130.0h0M366.4 130.0h0M368.4 130.0h0M370.4 131.0h0M372.4 131.0h0M374.4 131.0h0M376.4 131.0h0M378.4 131.0h0M380.3 131.0h0M382.3 131.0h0M384.3 131.0h0M386.3 131.0h0M388.3 131.0h0M390.3 131.0h0M392.3 131.0h0M394.3 131.0h0M396.3 131.0h0M398.3 131.0h0M400.3 133.0h0M402.3 132.0h0M404.3 132.0h0M406.2 132.0h0M408.2 132.0h0M410.2 132.0h0M412.2 132.0h0M414.2 132.0h0M416.2 132.0h0M418.2 132.0h0M420.2 132.0h0M422.2 132.0h0M424.2 132.0h0M426.2 132.0h0M428.2 132.0h0M430.2 133.0h0M432.1 133.0h0M434.1 133.0h0M436.1 133.0h0M438.1 133.0h0M440.1 133.0h0M442.1 133.0h0M444.1 133.0h0M446.1 133.0h0M448.1 133.0h0M450.1 133.0h0M452.1 133.0h0M454.1 133.0h0M456.1 133.0h0M458.1 133.0h0M460.0 134.0h0M462.0 134.0h0M464.0 134.0h0M466.0 134.0h0M468.0 134.0h0M470.0 134.0h0M472.0 134.0h0M474.0 134.0h0M476.0 134.0h0M478.0 134.0h0M480.0 134.0h0M482.0 134.0h0M484.0 134.0h0M485.9 134.0h0M487.9 134.0h0M489.9 134.0h0M491.9 134.0h0M493.9 134.0h0M495.9 135.0h0M497.9 135.0h0M499.9 135.0h0M501.9 135.0h0M503.9 135.0h0M505.9 135.0h0M507.9 135.0h0M509.9 135.0h0M511.8 135.0h0M513.8 135.0h0M515.8 135.0h0M517.8 135.0h0M519.8 135.0h0M521.8 135.0h0M523.8 135.0h0M525.8 135.0h0M527.8 135.0h0M529.8 136.0h0M531.8 136.0h0M533.8 136.0h0M535.8 136.0h0M537.8 136.0h0M539.7 136.0h0M541.7 136.0h0M543.7 136.0h0M545.7 136.0h0M547.7 136.0h0M549.7 136.0h0M551.7 136.0h0M553.7 136.0h0M555.7 136.0h0M557.7 136.0h0M559.7 136.0h0M561.7 137.0h0M563.7 137.0h0M565.6 137.0h0M567.6 137.0h0M569.6 137.0h0M571.6 137.0h0M573.6 137.0h0M575.6 137.0h0M577.6 137.0h0M579.6 137.0h0M581.6 137.0h0M583.6 137.0h0M585.6 137.0h0M587.6 137.0h0M589.6 138.0h0M591.5 137.0h0M593.5 138.0h0M595.5 138.0h0M597.5 138.0h0M599.5 138.0h0M601.5 138.0h0M603.5 138.0h0M605.5 138.0h0M607.5 138.0h0M609.5 138.0h0M611.5 138.0h0M613.5 138.0h0M615.5 138.0h0M617.5 138.0h0M619.4 138.0h0M621.4 138.0h0M623.4 138.0h0M625.4 138.0h0M627.4 138.0h0M629.4 138.0h0M631.4 139.0h0M633.4 139.0h0M635.4 139.0h0M637.4 139.0h0M639.4 139.0h0M641.4 139.0h0M643.4 139.0h0M645.3 139.0h0M647.3 139.0h0M649.3 139.0h0M651.3 139.0h0M653.3 139.0h0M655.3 139.0h0M657.3 139.0h0M659.3 139.0h0M661.3 140.0h0M663.3 140.0h0M665.3 140.0h0M667.3 140.0h0M669.3 140.0h0M671.2 140.0h0M673.2 140.0h0M675.2 140.0h0M677.2 140.0h0M679.2 140.0h0M681.2 140.0h0M683.2 140.0h0M685.2 140.0h0M687.2 140.0h0M689.2 140.0h0M691.2 140.0h0M693.2 140.0h0M695.2 141.0h0M697.2 140.0h0M699.1 141.0h0M701.1 141.0h0M703.1 141.0h0M705.1 141.0h0M707.1 141.0h0M709.1 141.0h0M711.1 141.0h0M713.1 141.0h0M715.1 141.0h0M717.1 141.0h0M719.1 141.0h0M721.1 141.0h0M723.1 141.0h0M725.0 141.0h0M727.0 141.0h0M729.0 141.0h0M731.0 141.0h0M733.0 142.0h0M735.0 142.0h0M737.0 142.0h0M739.0 142.0h0M741.0 142.0h0M743.0 142.0h0M745.0 142.0h0M747.0 142.0h0M749.0 142.0h0M750.9 142.0h0M752.9 142.0h0M754.9 142.0h0M756.9 142.0h0M758.9 142.0h0M760.9 142.0h0M762.9 142.0h0M764.9 142.0h0M766.9 142.0h0M768.9 143.0h0M770.9 143.0h0M772.9 143.0h0M774.9 143.0h0M776.9 143.0h0M778.8 143.0h0M780.8 143.0h0M782.8 143.0h0M784.8 143.0h0M786.8 143.0h0M788.8 143.0h0M790.8 143.0h0M792.8 143.0h0M794.8 143.0h0M796.8 143.0h0M798.8 143.0h0M800.8 143.0h0M802.8 143.0h0M804.7 143.0h0M806.7 143.0h0M808.7 143.0h0M810.7 144.0h0M812.7 144.0h0M814.7 144.0h0M816.7 144.0h0M818.7 144.0h0M820.7 144.0h0M822.7 144.0h0M824.7 144.0h0M826.7 144.0h0M828.7 144.0h0M830.6 144.0h0M832.6 144.0h0M834.6 144.0h0M836.6 144.0h0M838.6 144.0h0M840.6 144.0h0M842.6 144.0h0M844.6 144.0h0M846.6 144.0h0M848.6 144.0h0M850.6 144.0h0M852.6 144.0h0M854.6 144.0h0M856.6 144.0h0M858.5 145.0h0M860.5 145.0h0M862.5 145.0h0M864.5 145.0h0M866.5 145.0h0M868.5 145.0h0M870.5 145.0h0" stroke="#edb120" stroke-width="3.15"/>
</g>
<g stroke="#cf0a90" stroke-width="1.35" fill="none">
<path d="M273.5 301.8V311.2M268.7 306.5H278.3M270.1 303.1L276.9 309.9M276.9 303.1L270.1 309.9"/>
<path d="M472.4 195.5V204.9M467.6 200.2H477.2M469.0 196.8L475.8 203.6M475.8 196.8L469.0 203.6"/>
<path d="M671.4 193.9V203.3M666.6 198.6H676.2M668.0 195.2L674.8 202.0M674.8 195.2L668.0 202.0"/>
<path d="M870.6 182.7V192.1M865.8 187.4H875.4M867.2 184.0L874.0 190.8M874.0 184.0L867.2 190.8"/>
</g>
<g fill="#262626" font-size="12">
<text x="70" y="124.4" text-anchor="end">0</text>
<text x="70" y="216.8" text-anchor="end">-1000</text>
<text x="70" y="309.3" text-anchor="end">-2000</text>
<text x="70" y="401.7" text-anchor="end">-3000</text>
<text x="70" y="494.1" text-anchor="end">-4000</text>
<text x="70" y="586.5" text-anchor="end">-5000</text>
<text x="70" y="679.0" text-anchor="end">-6000</text>
<text x="70" y="771.4" text-anchor="end">-7000</text>
<text x="74.3" y="783.2" text-anchor="middle">0</text>
<text x="173.7" y="783.2" text-anchor="middle">50</text>
<text x="273.1" y="783.2" text-anchor="middle">100</text>
<text x="372.6" y="783.2" text-anchor="middle">150</text>
<text x="472.0" y="783.2" text-anchor="middle">200</text>
<text x="571.4" y="783.2" text-anchor="middle">250</text>
<text x="670.8" y="783.2" text-anchor="middle">300</text>
<text x="770.3" y="783.2" text-anchor="middle">350</text>
<text x="869.7" y="783.2" text-anchor="middle">400</text>
</g>
<text x="472.7" y="798.3" text-anchor="middle" font-size="13.2" fill="#262626">Episode Number</text>
<text transform="translate(32.3 444.6) rotate(-90)" text-anchor="middle" font-size="13.2" fill="#262626">Episode Reward</text>
<text x="473" y="113.6" text-anchor="middle" font-size="13.2" font-weight="bold" fill="#262626">Episode reward for rlSimplePendulumModel with rlSACAgent</text>
</svg>
</body></html>
